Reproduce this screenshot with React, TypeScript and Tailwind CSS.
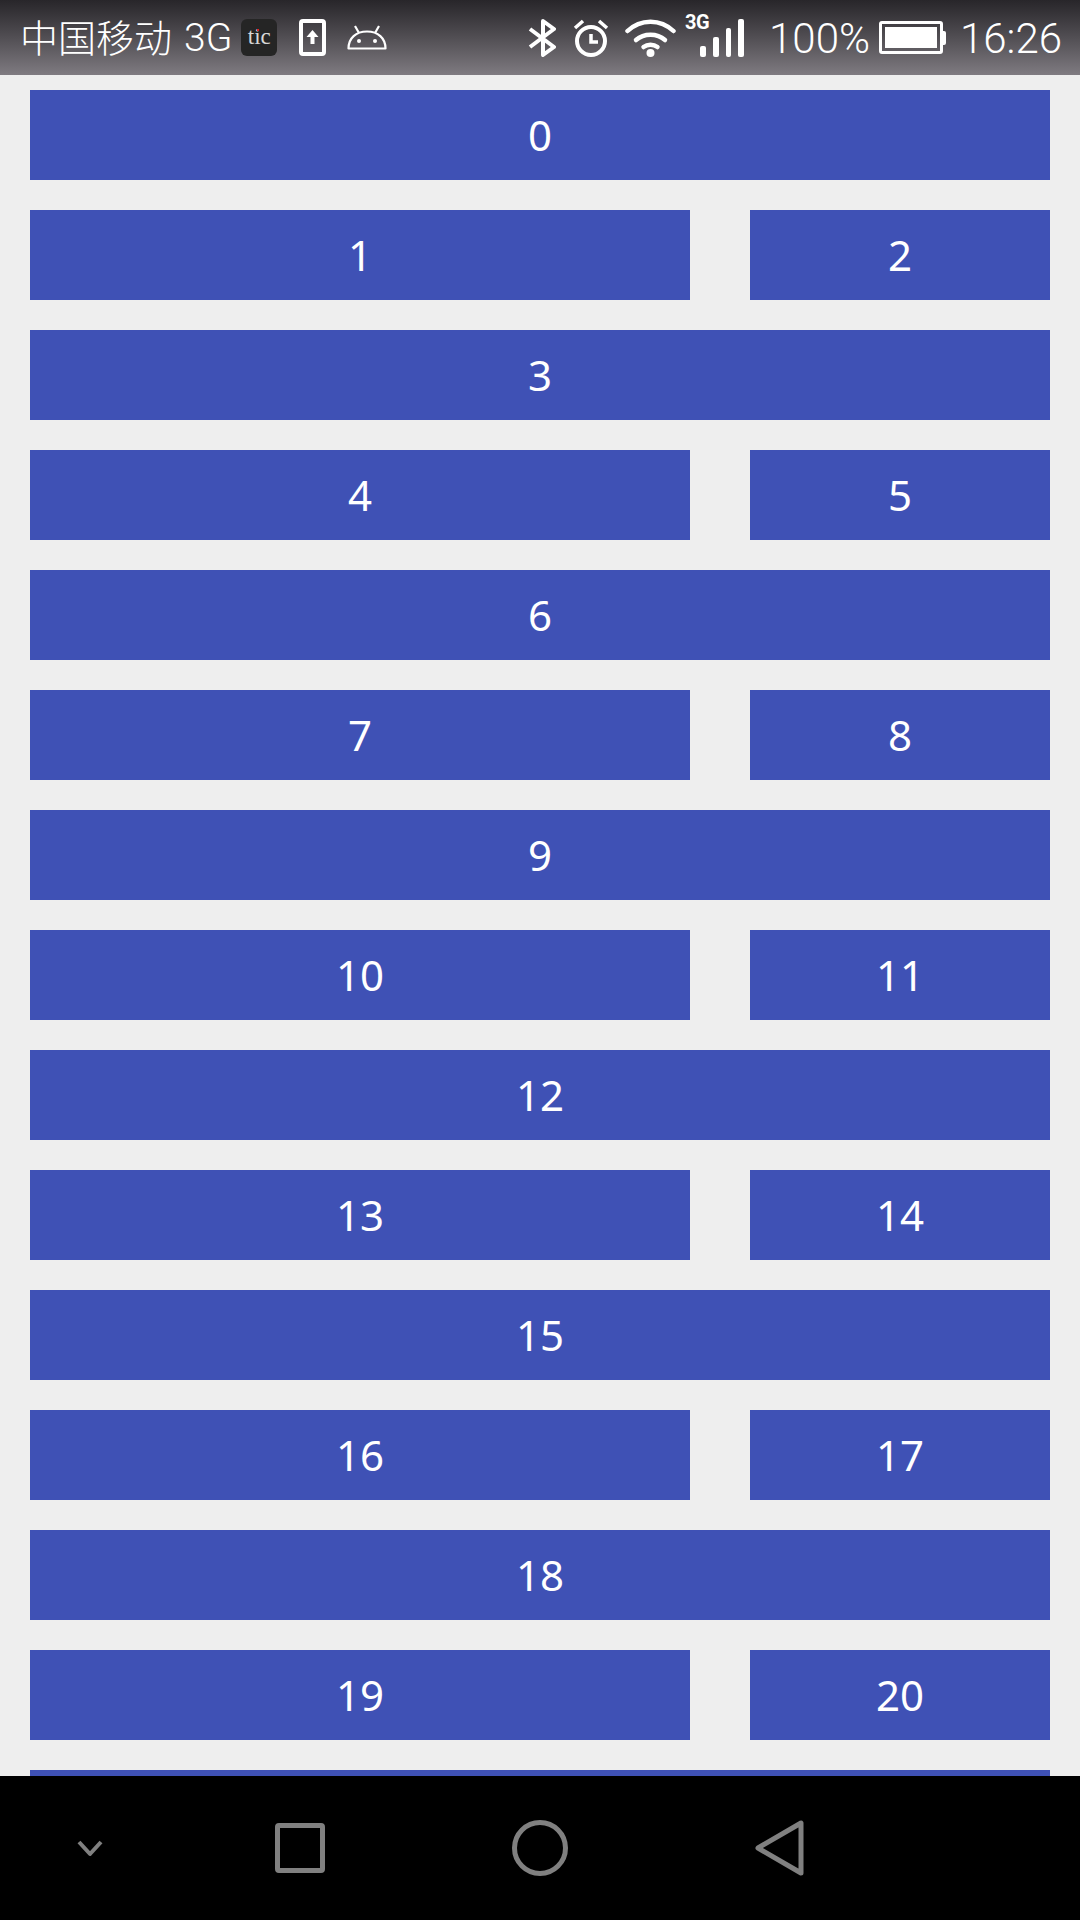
const rows = [0, 1, 3, 4, 6, 7, 9, 10, 12, 13, 15, 16, 18, 19, 21];

const Tile = ({ label, className }: { label?: number; className: string }) => (
  <div className={`flex h-[90px] items-center justify-center bg-[#3f51b5] pb-[2px] text-[42px] text-white ${className}`}>
    {label}
  </div>
);

const TicIcon = () => (
  <div className="relative ml-[9px] flex h-[37px] w-[36px] items-center justify-center rounded-[6px] bg-[#252525] pb-[2px] font-['Liberation_Serif',serif] text-[23px] leading-none text-[#d8d8d8]">
    tic
    <span className="absolute left-[16px] top-[10px] h-[2px] w-[2px] bg-[#e02020]" />
  </div>
);

const UploadIcon = () => (
  <svg className="ml-[22px]" width="27" height="37" viewBox="0 0 27 37" fill="none">
    <rect x="2" y="2" width="23" height="33" rx="2" stroke="white" strokeWidth="4" />
    <path d="M13.5 11l6 7h-4v7h-4v-7h-4z" fill="white" />
  </svg>
);

const AndroidIcon = () => (
  <svg className="ml-[21px]" width="40" height="25" viewBox="0 0 40 25" fill="none" stroke="white" strokeWidth="2.2">
    <path d="M1.5 23.5C1.5 13 9 6.5 20 6.5S38.500 13 38.500 23.500Z" strokeLinejoin="round" />
    <path d="M8 1l4 7M32 1l-4 7" />
    <circle cx="12" cy="16" r="2" fill="white" stroke="none" />
    <circle cx="28" cy="16" r="2" fill="white" stroke="none" />
  </svg>
);

const BluetoothIcon = () => (
  <svg className="ml-auto" width="28" height="38" viewBox="0 0 28 38" fill="none" stroke="white" strokeWidth="4" strokeLinejoin="round">
    <path d="M2 10l24 18-11 8V2l11 8L2 28" />
  </svg>
);

const AlarmIcon = () => (
  <svg className="ml-[17px]" width="36" height="38" viewBox="0 0 36 38" fill="none" stroke="white">
    <circle cx="18" cy="22" r="14" strokeWidth="4" />
    <path d="M18 15v8h7" strokeWidth="3.500" />
    <path d="M2 9l8-7M34 9l-8-7" strokeWidth="3.500" />
  </svg>
);

const WifiIcon = () => (
  <svg className="ml-[16px]" width="51" height="38" viewBox="0 0 51 38" fill="none" stroke="white" strokeWidth="4.500" strokeLinecap="round">
    <path d="M2.500 12c13-12.500 33-12.500 46 0" />
    <path d="M11 21c8-7 21-7 29 0" />
    <path d="M18.500 28c4-3 10-3 14 0" />
    <circle cx="25.500" cy="34" r="4" fill="white" stroke="none" />
  </svg>
);

const SignalIcon = () => (
  <div className="relative ml-[24px] flex h-[38px] w-[44px] items-end gap-[7px]">
    <span className="absolute left-[-15px] top-[-7px] font-['Roboto',sans-serif] text-[20px] font-bold leading-none tracking-[-0.5px] text-white">3G</span>
    <span className="h-[11px] w-[6px] rounded-[2px] bg-white" />
    <span className="h-[20px] w-[6px] rounded-[2px] bg-white" />
    <span className="h-[29px] w-[6px] rounded-[2px] bg-white" />
    <span className="h-[38px] w-[6px] rounded-[2px] bg-white" />
  </div>
);

const BatteryIcon = () => (
  <div className="ml-[9px] flex items-center">
    <div className="h-[33px] w-[64px] rounded-[3px] border-[3px] border-white p-[3px]">
      <div className="h-full w-full bg-white" />
    </div>
    <div className="h-[14px] w-[3px] rounded-r-[2px] bg-white" />
  </div>
);

const NavIcon = ({ children }: { children: React.ReactNode }) => (
  <div className="flex w-[240px] items-center justify-center">{children}</div>
);

export default function App() {
  return (
    <div className="flex h-[1920px] w-[1080px] flex-col overflow-hidden bg-[#eeeeee] font-['Noto_Sans','Open_Sans',sans-serif]">
      <div className="flex h-[75px] shrink-0 items-center bg-gradient-to-b from-[#28262a] to-[#7f7b81] pl-[20px] pr-[18px] text-white">
        <span className="pb-[3px] font-['Noto_Sans_CJK_SC',sans-serif] text-[38px] font-light leading-none">中国移动</span>
        <span className="ml-[12px] pt-[2px] font-['Roboto',sans-serif] text-[39px] font-light leading-none">3G</span>
        <TicIcon />
        <UploadIcon />
        <AndroidIcon />
        <BluetoothIcon />
        <AlarmIcon />
        <WifiIcon />
        <SignalIcon />
        <span className="ml-[25px] pt-[2px] font-['Roboto',sans-serif] text-[42px] font-light leading-none">100%</span>
        <BatteryIcon />
        <span className="ml-[14px] pt-[2px] font-['Roboto',sans-serif] text-[42px] font-light leading-none">16:26</span>
      </div>

      <div className="flex min-h-0 flex-1 flex-col gap-[30px] overflow-hidden px-[30px] pt-[15px]">
        {rows.map((n) =>
          n % 3 === 0 ? (
            <div key={n} className="flex shrink-0">
              <Tile label={n < 21 ? n : undefined} className="w-full" />
            </div>
          ) : (
            <div key={n} className="flex shrink-0 gap-[60px]">
              <Tile label={n} className="w-[660px]" />
              <Tile label={n + 1} className="w-[300px]" />
            </div>
          ),
        )}
      </div>

      <div className="flex h-[144px] shrink-0 items-center bg-black">
        <div className="flex w-[180px] items-center justify-center">
          <svg width="26" height="17" viewBox="0 0 26 17" fill="none" stroke="#808080" strokeWidth="4" strokeLinejoin="round">
            <path d="M2 2l11 12L24 2" />
          </svg>
        </div>
        <div className="flex w-[240px] items-center justify-center">
          <div className="h-[50px] w-[50px] rounded-[4px] border-[5px] border-[#808080]" />
        </div>
        <NavIcon>
          <div className="h-[56px] w-[56px] rounded-full border-[5px] border-[#808080]" />
        </NavIcon>
        <NavIcon>
          <svg width="50" height="56" viewBox="0 0 50 56" fill="none" stroke="#808080" strokeWidth="5" strokeLinejoin="round">
            <path d="M46 3v50L3 28z" />
          </svg>
        </NavIcon>
      </div>
    </div>
  );
}
